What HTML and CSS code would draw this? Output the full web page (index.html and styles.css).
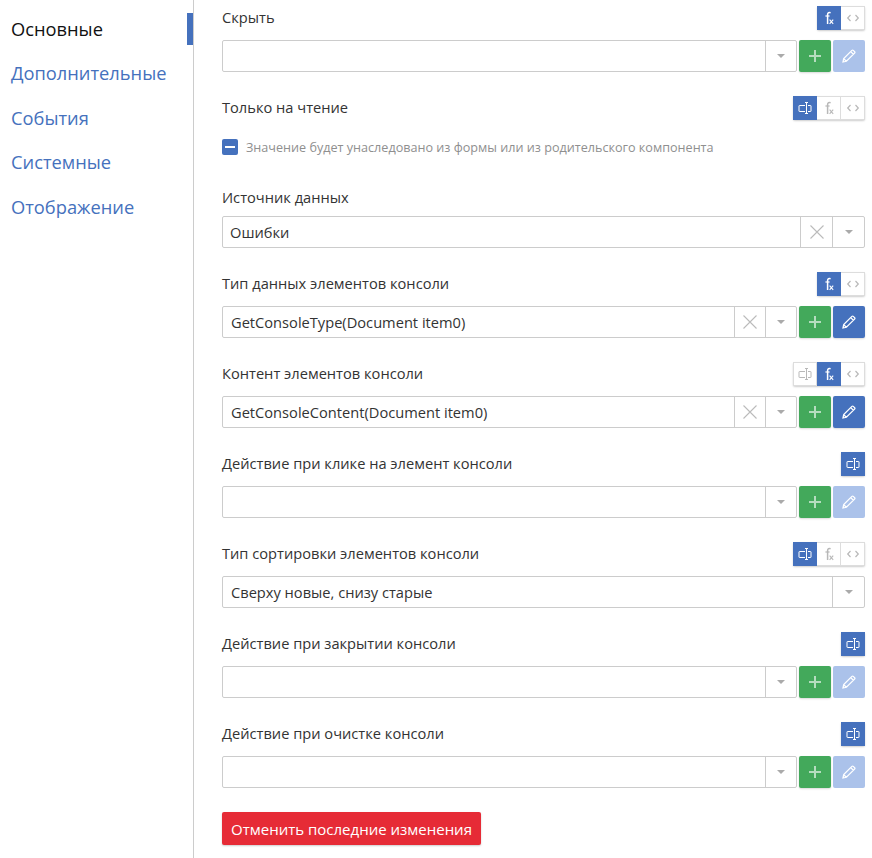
FILE: index.html
```html
<!DOCTYPE html>
<html lang="ru">
<head>
<meta charset="utf-8">
<title>Свойства</title>
<link rel="stylesheet" href="styles.css">
</head>
<body>
<svg class="defs" width="0" height="0" aria-hidden="true">
  <defs>
    <symbol id="i-text" viewBox="0 0 14 14"><path d="M7 4.5H1.5a.5.5 0 0 0-.5.5v5a.5.5 0 0 0 .5.5H7M10 4.5h2.5a.5.5 0 0 1 .5.5v5a.5.5 0 0 1-.5.5H10M7 1.5h3M8.5 1.5v11M7 12.5h3" fill="none" stroke="currentColor" stroke-width="1"/></symbol>
    <symbol id="i-fx" viewBox="0 0 14 14"><path d="M8.6 1.8C7 1.2 5.6 1.7 5.6 3.4V13" fill="none" stroke="currentColor" stroke-width="1.5"/><path d="M3.4 5H7.6" fill="none" stroke="currentColor" stroke-width="1.2"/><path d="M7.6 8.6l3.6 4.2M11.2 8.6l-3.6 4.2" fill="none" stroke="currentColor" stroke-width="1.1"/></symbol>
    <symbol id="i-code" viewBox="0 0 14 14"><path d="M4.5 4L1.7 7l2.8 3M9.5 4l2.8 3-2.8 3" fill="none" stroke="currentColor" stroke-width="1.2"/></symbol>
    <symbol id="i-x" viewBox="0 0 14 14"><path d="M.5.5l13 13M13.5.5l-13 13" fill="none" stroke="currentColor" stroke-width="1.1"/></symbol>
    <symbol id="i-plus" viewBox="0 0 12 12"><path d="M6 0v12M0 6h12" fill="none" stroke="currentColor" stroke-width="2"/></symbol>
    <symbol id="i-pencil" viewBox="0 0 14 14"><path d="M1 13l.7-3.4L9.9 1.4a1 1 0 0 1 1.4 0l1.3 1.3a1 1 0 0 1 0 1.4L4.4 12.3zM8.7 2.6l2.7 2.7M1.7 9.6l2.7 2.7" fill="none" stroke="currentColor" stroke-width="1.25"/></symbol>
  </defs>
</svg>
<div class="layout">
  <nav class="side">
    <a class="tab tab-active">Основные</a>
    <a class="tab">Дополнительные</a>
    <a class="tab">События</a>
    <a class="tab">Системные</a>
    <a class="tab">Отображение</a>
  </nav>
  <main class="main">
    <section class="field">
      <div class="head"><span class="label">Скрыть</span>
        <div class="tools">
          <span class="tool tool-on"><svg class="ic"><use href="#i-fx"/></svg></span>
          <span class="tool"><svg class="ic"><use href="#i-code"/></svg></span>
        </div>
      </div>
      <div class="control">
        <div class="select"><span class="value"></span><span class="cell"><i class="caret"></i></span></div>
        <span class="btn btn-add"><svg class="ic-plus"><use href="#i-plus"/></svg></span>
        <span class="btn btn-edit-off"><svg class="ic-pen"><use href="#i-pencil"/></svg></span>
      </div>
    </section>

    <section class="field field-check">
      <div class="head"><span class="label">Только на чтение</span>
        <div class="tools">
          <span class="tool tool-on"><svg class="ic"><use href="#i-text"/></svg></span>
          <span class="tool"><svg class="ic"><use href="#i-fx"/></svg></span>
          <span class="tool"><svg class="ic"><use href="#i-code"/></svg></span>
        </div>
      </div>
      <div class="check"><span class="box"><i class="dash"></i></span><span class="hint">Значение будет унаследовано из формы или из родительского компонента</span></div>
    </section>

    <section class="field">
      <div class="head head-plain"><span class="label">Источник данных</span></div>
      <div class="control">
        <div class="select select-full"><span class="value value-tight">Ошибки</span><span class="cell cell-x"><svg class="ic-x"><use href="#i-x"/></svg></span><span class="cell"><i class="caret"></i></span></div>
      </div>
    </section>

    <section class="field">
      <div class="head"><span class="label">Тип данных элементов консоли</span>
        <div class="tools">
          <span class="tool tool-on"><svg class="ic"><use href="#i-fx"/></svg></span>
          <span class="tool"><svg class="ic"><use href="#i-code"/></svg></span>
        </div>
      </div>
      <div class="control">
        <div class="select"><span class="value">GetConsoleType(Document item0)</span><span class="cell cell-x"><svg class="ic-x"><use href="#i-x"/></svg></span><span class="cell"><i class="caret"></i></span></div>
        <span class="btn btn-add"><svg class="ic-plus"><use href="#i-plus"/></svg></span>
        <span class="btn btn-edit"><svg class="ic-pen"><use href="#i-pencil"/></svg></span>
      </div>
    </section>

    <section class="field">
      <div class="head"><span class="label">Контент элементов консоли</span>
        <div class="tools">
          <span class="tool"><svg class="ic"><use href="#i-text"/></svg></span>
          <span class="tool tool-on"><svg class="ic"><use href="#i-fx"/></svg></span>
          <span class="tool"><svg class="ic"><use href="#i-code"/></svg></span>
        </div>
      </div>
      <div class="control">
        <div class="select"><span class="value">GetConsoleContent(Document item0)</span><span class="cell cell-x"><svg class="ic-x"><use href="#i-x"/></svg></span><span class="cell"><i class="caret"></i></span></div>
        <span class="btn btn-add"><svg class="ic-plus"><use href="#i-plus"/></svg></span>
        <span class="btn btn-edit"><svg class="ic-pen"><use href="#i-pencil"/></svg></span>
      </div>
    </section>

    <section class="field">
      <div class="head"><span class="label">Действие при клике на элемент консоли</span>
        <div class="tools">
          <span class="tool tool-on"><svg class="ic"><use href="#i-text"/></svg></span>
        </div>
      </div>
      <div class="control">
        <div class="select"><span class="value"></span><span class="cell"><i class="caret"></i></span></div>
        <span class="btn btn-add"><svg class="ic-plus"><use href="#i-plus"/></svg></span>
        <span class="btn btn-edit-off"><svg class="ic-pen"><use href="#i-pencil"/></svg></span>
      </div>
    </section>

    <section class="field">
      <div class="head"><span class="label">Тип сортировки элементов консоли</span>
        <div class="tools">
          <span class="tool tool-on"><svg class="ic"><use href="#i-text"/></svg></span>
          <span class="tool"><svg class="ic"><use href="#i-fx"/></svg></span>
          <span class="tool"><svg class="ic"><use href="#i-code"/></svg></span>
        </div>
      </div>
      <div class="control">
        <div class="select select-full"><span class="value">Сверху новые, снизу старые</span><span class="cell"><i class="caret"></i></span></div>
      </div>
    </section>

    <section class="field">
      <div class="head"><span class="label">Действие при закрытии консоли</span>
        <div class="tools">
          <span class="tool tool-on"><svg class="ic"><use href="#i-text"/></svg></span>
        </div>
      </div>
      <div class="control">
        <div class="select"><span class="value"></span><span class="cell"><i class="caret"></i></span></div>
        <span class="btn btn-add"><svg class="ic-plus"><use href="#i-plus"/></svg></span>
        <span class="btn btn-edit-off"><svg class="ic-pen"><use href="#i-pencil"/></svg></span>
      </div>
    </section>

    <section class="field">
      <div class="head"><span class="label">Действие при очистке консоли</span>
        <div class="tools">
          <span class="tool tool-on"><svg class="ic"><use href="#i-text"/></svg></span>
        </div>
      </div>
      <div class="control">
        <div class="select"><span class="value"></span><span class="cell"><i class="caret"></i></span></div>
        <span class="btn btn-add"><svg class="ic-plus"><use href="#i-plus"/></svg></span>
        <span class="btn btn-edit-off"><svg class="ic-pen"><use href="#i-pencil"/></svg></span>
      </div>
    </section>

    <button class="reset" type="button">Отменить последние изменения</button>
  </main>
</div>
</body>
</html>
```
FILE: styles.css
```css
* { box-sizing: border-box; }
html, body { margin: 0; padding: 0; height: 100%; overflow: hidden; }
body { background: #fff; color: #333; font-family: "Open Sans", "Noto Sans", sans-serif; font-size: 14.65px; }
.defs { display: block; height: 0; width: 0; }
.layout { display: flex; height: 858px; }

.side { width: 194px; flex: none; border-right: 1px solid #ccc; padding-top: 6.6px; display: flex; flex-direction: column; }
.tab { display: block; height: 44.5px; line-height: 44.5px; padding-left: 11px; font-size: 18.3px; color: #4571bd; }
.tab-active { color: #111; position: relative; }
.tab-active::after { content: ""; position: absolute; right: 0; top: 6.4px; width: 6px; height: 32px; background: #4571bd; }

.main { flex: none; width: 643px; margin-left: 28px; padding-top: 6px; }
.field { margin-bottom: 24px; }
.field-check { margin-bottom: 0; height: 90px; }
.head { display: flex; justify-content: space-between; height: 24px; margin-bottom: 10px; }
.head-plain { height: 21px; margin-bottom: 9px; }
.label { line-height: 23px; white-space: nowrap; }

.tools { display: flex; height: 24px; box-shadow: 0 1px 2px rgba(0,0,0,.2); border-radius: 2px; }
.tool { width: 24px; height: 24px; display: flex; align-items: center; justify-content: center; border: 1px solid #ddd; border-left-width: 0; background: #fff; color: #b8b8b8; }
.tool:first-child { border-left-width: 1px; }
.tool-on { background: #4571bd; border-color: #4571bd; color: #fff; }
.ic { width: 14px; height: 14px; display: block; }

.control { display: flex; gap: 2px; height: 32px; }
.select { flex: 1; display: flex; border: 1px solid #ccc; border-radius: 2px; background: #fff; }
.value { flex: 1; line-height: 31px; padding-left: 8px; white-space: nowrap; overflow: hidden; }
.value-tight { padding-left: 7px; }
.cell { width: 31px; flex: none; border-left: 1px solid #ccc; display: flex; align-items: center; justify-content: center; color: #bbb; }
.select-full .cell { width: 32px; }
.caret { display: block; width: 0; height: 0; border-left: 4px solid transparent; border-right: 4px solid transparent; border-top: 4px solid #aaa; }
.ic-x { width: 14px; height: 14px; display: block; }

.btn { width: 32px; height: 32px; flex: none; display: flex; align-items: center; justify-content: center; border-radius: 2px; box-shadow: 0 1px 2px rgba(0,0,0,.15); }
.btn-add { background: #43a95b; color: #b5ddbf; }
.btn-edit { background: #4571bd; color: #fff; }
.btn-edit-off { background: #abc2ea; color: #fff; box-shadow: none; }
.ic-plus { width: 12px; height: 12px; display: block; }
.ic-pen { width: 14px; height: 14px; display: block; }

.check { display: flex; align-items: center; gap: 8px; margin-top: 18px; height: 18px; }
.box { width: 16px; height: 16px; border-radius: 2px; background: #4571bd; display: flex; align-items: center; justify-content: center; }
.dash { display: block; width: 10px; height: 2px; background: #fff; }
.hint { font-size: 12.62px; color: #8f8f8f; white-space: nowrap; }

.reset { display: block; height: 33px; width: 259px; padding: 0; border: 0; border-radius: 2px; background: #e62b36; color: #fff; font: 500 15px "Open Sans", "Noto Sans", sans-serif; box-shadow: 0 1px 2px rgba(0,0,0,.2); }
```
